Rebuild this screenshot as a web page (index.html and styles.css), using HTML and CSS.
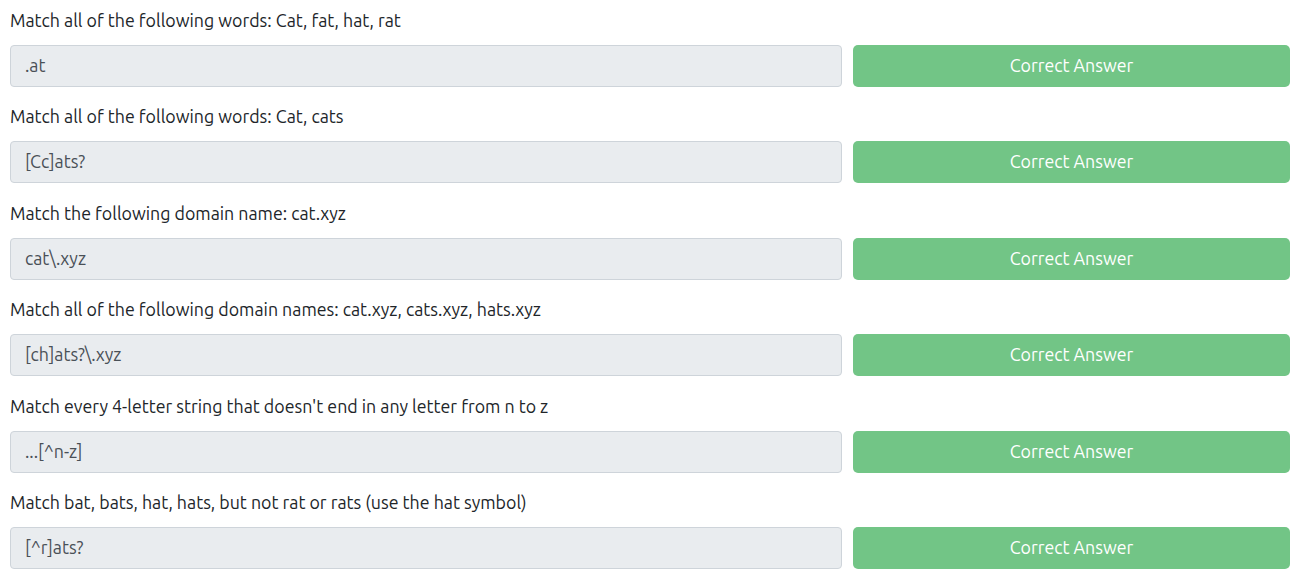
FILE: index.html
```html
<!DOCTYPE html>
<html lang="en">
<head>
<meta charset="utf-8">
<title>Regex answers</title>
<link rel="stylesheet" href="styles.css">
</head>
<body>
<main class="list">
  <section class="item">
    <p class="prompt">Match all of the following words: Cat, fat, hat, rat</p>
    <div class="answer-row">
      <div class="answer">.at</div>
      <button class="btn">Correct Answer</button>
    </div>
  </section>
  <section class="item">
    <p class="prompt">Match all of the following words: Cat, cats</p>
    <div class="answer-row">
      <div class="answer">[Cc]ats?</div>
      <button class="btn">Correct Answer</button>
    </div>
  </section>
  <section class="item">
    <p class="prompt">Match the following domain name: cat.xyz</p>
    <div class="answer-row">
      <div class="answer">cat\.xyz</div>
      <button class="btn">Correct Answer</button>
    </div>
  </section>
  <section class="item">
    <p class="prompt">Match all of the following domain names: cat.xyz, cats.xyz, hats.xyz</p>
    <div class="answer-row">
      <div class="answer">[ch]ats?\.xyz</div>
      <button class="btn">Correct Answer</button>
    </div>
  </section>
  <section class="item">
    <p class="prompt">Match every 4-letter string that doesn't end in any letter from n to z</p>
    <div class="answer-row">
      <div class="answer">...[^n-z]</div>
      <button class="btn">Correct Answer</button>
    </div>
  </section>
  <section class="item">
    <p class="prompt">Match bat, bats, hat, hats, but not rat or rats (use the hat symbol)</p>
    <div class="answer-row">
      <div class="answer">[^r]ats?</div>
      <button class="btn">Correct Answer</button>
    </div>
  </section>
</main>
</body>
</html>
```

FILE: styles.css
```css
html, body {
  margin: 0;
  padding: 0;
  background: #ffffff;
}
body {
  font-family: "Ubuntu", "Noto Sans", "Open Sans", sans-serif;
  font-size: 17.8px;
  line-height: 24px;
  color: #212529;
}
.list {
  display: flex;
  flex-direction: column;
  gap: 17.4px;
  padding: 8px 9px 0 10px;
}
.item {
  display: flex;
  flex-direction: column;
  gap: 13px;
}
.prompt {
  margin: 0;
}
.answer-row {
  display: grid;
  grid-template-columns: 1fr 437px;
  gap: 11px;
}
.answer {
  height: 42px;
  box-sizing: border-box;
  background: #e9ecef;
  border: 1px solid #ced4da;
  border-radius: 4px;
  padding: 7px 14px 9px;
  color: #495057;
}
.btn {
  height: 42px;
  border: 0;
  border-radius: 5px;
  background: #72c586;
  color: #ffffff;
  font: inherit;
  padding: 0 0 2px;
  cursor: pointer;
}
```
